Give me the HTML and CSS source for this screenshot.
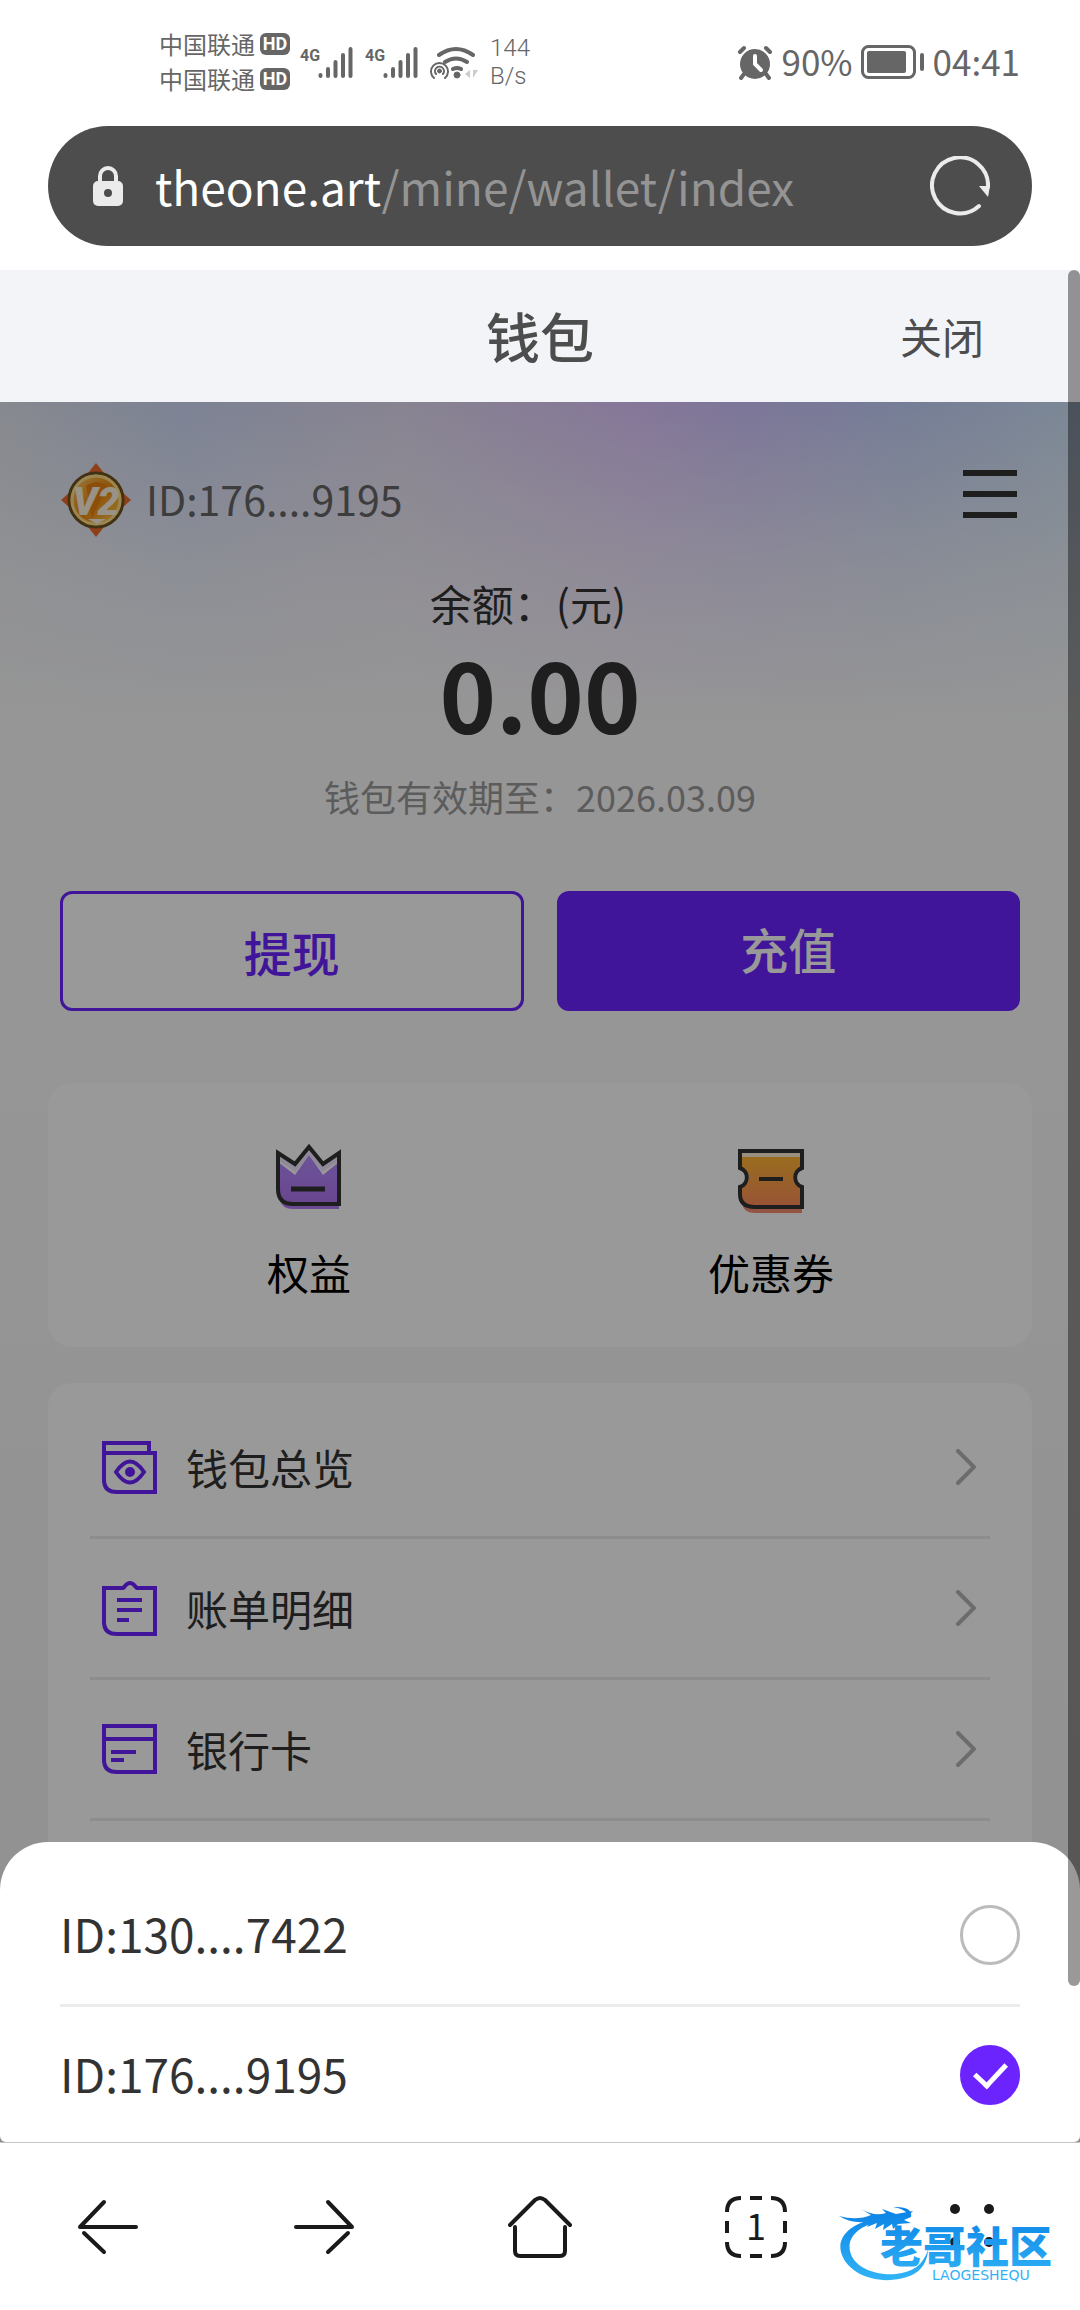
FILE: index.html
```
<!doctype html>
<html lang="zh-CN">
	<head>
		<meta charset="UTF-8" />
		<meta name="viewport" content="width=device-width, initial-scale=1.0" />
		<title>钱包</title>
		<link rel="stylesheet" href="styles.css">
	</head>
	<body>
		<div class="status-bar">
			<div class="carriers">
				<div class="carrier">中国联通<span class="hd">HD</span></div>
				<div class="carrier">中国联通<span class="hd">HD</span></div>
			</div>
			<svg class="signal" width="54" height="36" viewBox="0 0 54 36">
				<text x="0" y="17">4G</text>
				<path d="M20.500 31v1M28 25v7M35.500 18v14M43 11v21M50.500 5v27" />
			</svg>
			<svg class="signal" width="54" height="36" viewBox="0 0 54 36">
				<text x="0" y="17">4G</text>
				<path d="M20.500 31v1M28 25v7M35.500 18v14M43 11v21M50.500 5v27" />
			</svg>
			<svg class="wifi" width="50" height="36" viewBox="0 0 50 36">
				<path d="M9 11q17-12 34 0M15 18q11-7 22 0M23 25q4-2 8 0" stroke-width="4" />
				<path d="M4 34a8.500 8.500 0 1 1 11 0M6 30a4.500 4.500 0 1 1 7 0" stroke-width="2" />
				<circle cx="9.500" cy="27" r="2" />
				<circle cx="27" cy="31" r="3" />
				<path class="faint" d="M40 26v8l-5-4zM43 26h5l-5 8z" />
			</svg>
			<div class="speed">144<br>B/s</div>
			<div class="status-right">
				<svg width="36" height="36" viewBox="0 0 36 36">
					<circle cx="18" cy="20" r="15" fill="#666" />
					<path d="M3 8l4-4M33 8l-4-4M7 30l-3 4M29 30l3 4" stroke="#666" stroke-width="4" stroke-linecap="round" />
					<path d="M18 12v8l6 6" fill="none" stroke="#fff" stroke-width="4" stroke-linecap="round" />
				</svg>
				<span>90%</span>
				<svg width="64" height="34" viewBox="0 0 64 34">
					<rect x="1.500" y="1.500" width="52" height="31" rx="6" fill="none" stroke="#666" stroke-width="3" />
					<rect x="6" y="6" width="39" height="22" rx="2" fill="#666" />
					<path d="M61 10v14" stroke="#666" stroke-width="4" stroke-linecap="round" />
				</svg>
				<span>04:41</span>
			</div>
		</div>

		<div class="address-bar">
			<button class="address" type="button">
				<svg width="30" height="40" viewBox="0 0 30 40">
					<path d="M7 17v-7a8 8 0 0 1 16 0v7" fill="none" stroke="#ebebeb" stroke-width="4" />
					<rect y="15" width="30" height="25" rx="5" fill="#ebebeb" />
					<circle cx="15" cy="27" r="4" fill="#4d4d4d" />
				</svg>
				<span class="url">theone.art<span class="path">/mine/wallet/index</span></span>
			</button>
			<button class="reload" type="button" aria-label="刷新">
				<svg width="60" height="60" viewBox="0 0 60 60">
					<path d="M49 50A28 28 0 1 1 58 31" fill="none" stroke="#ebebeb" stroke-width="4" stroke-linecap="round" />
					<path d="M49 30h11l-2 11z" fill="#ebebeb" />
				</svg>
			</button>
		</div>

		<div class="webview">
			<header class="title-bar">
				<h1>钱包</h1>
				<a href="#">关闭</a>
			</header>

			<main class="wallet">
				<div class="account-row">
					<div class="account">
						<svg width="72" height="76" viewBox="0 0 72 76">
							<defs>
								<linearGradient id="gold" x1="0" y1="0" x2="1" y2="1">
									<stop offset="0" stop-color="#ffcf70" />
									<stop offset=".5" stop-color="#f08c10" />
									<stop offset="1" stop-color="#ffd95c" />
								</linearGradient>
							</defs>
							<path d="M36 1l8 10H28zM36 75l8-10H28zM1 38l9-8v16zM71 38l-9-8v16z" fill="#ee6a2c" />
							<circle cx="36" cy="38" r="27" fill="url(#gold)" stroke="#6e5420" stroke-width="3" />
							<circle cx="36" cy="38" r="24" fill="none" stroke="#ffdf8a" stroke-width="3" />
							<path d="M26 24q11-8 21 0l-15 32z" fill="#e98310" />
							<text class="badge-text" x="36" y="53">V2</text>
							<path d="M28 57h18l-9 5z" fill="#fff3e0" />
						</svg>
						<span>ID:176....9195</span>
					</div>
					<button class="menu" type="button" aria-label="菜单"><i></i><i></i><i></i></button>
				</div>

				<p class="balance-label">余额：(元)</p>
				<p class="balance">0.00</p>
				<p class="expiry">钱包有效期至：2026.03.09</p>

				<div class="actions">
					<button class="withdraw" type="button">提现</button>
					<button class="recharge" type="button">充值</button>
				</div>

				<div class="card shortcuts">
					<a href="#">
						<svg width="72" height="76" viewBox="0 0 72 76">
							<defs>
								<linearGradient id="violet" x1="0" y1="0" x2="0" y2="1">
									<stop offset="0" stop-color="#b48cff" />
									<stop offset="1" stop-color="#b074f0" />
								</linearGradient>
							</defs>
							<path d="M7 60h59v9H20Q9 69 7 60z" fill="#b47af5" />
							<path d="M5 22l17 13L36 15l14 20 16-13v42H20Q5 64 5 51z" fill="url(#violet)" />
							<path d="M5 18l17 11L36 12l14 17 16-11" fill="none" stroke="#eee4ff" stroke-width="4" />
							<path d="M5 13l17 11L36 7l14 17 16-11v51H20Q5 64 5 49z" fill="none" stroke="#333" stroke-width="4" />
							<path d="M18 49h34" stroke="#333" stroke-width="5" />
						</svg>
						<span>权益</span>
					</a>
					<a href="#">
						<svg width="72" height="76" viewBox="0 0 72 76">
							<defs>
								<linearGradient id="orange" x1="0" y1="0" x2="0" y2="1">
									<stop offset="0" stop-color="#ffb534" />
									<stop offset="1" stop-color="#ff8b5c" />
								</linearGradient>
							</defs>
							<path d="M7 64h60v9H20Q9 73 7 64z" fill="#f58c70" />
							<path d="M5 17h62v12a9 9 0 0 0 0 18v20H20Q5 67 5 54v-7a9 9 0 0 0 0-18z" fill="url(#orange)" />
							<path d="M6 15h60" stroke="#ffefd8" stroke-width="4" />
							<path d="M5 11h62v17a10 10 0 0 0 0 19v20H20Q5 67 5 54v-7a10 10 0 0 0 0-19z" fill="none" stroke="#333" stroke-width="4" />
							<path d="M24 39h24" stroke="#333" stroke-width="4" />
						</svg>
						<span>优惠券</span>
					</a>
				</div>

				<nav class="card list">
					<a href="#">
						<svg class="list-icon" width="56" height="56" viewBox="0 0 56 56">
							<path d="M2 14h51v39H15Q2 53 2 41V4h45v10" />
							<path d="M14 33q14-21 28 0q-14 21-28 0z" />
							<circle cx="28" cy="33" r="5" />
						</svg>
						<span>钱包总览</span>
						<svg class="chevron" width="20" height="36" viewBox="0 0 20 36"><path d="M2 2l16 16L2 34" /></svg>
					</a>
					<a href="#">
						<svg class="list-icon" width="56" height="56" viewBox="0 0 56 56">
							<path d="M2 8h18q2 0 3-2q5-6 10 0q1 2 3 2h17v46H15Q2 54 2 42z" />
							<path d="M15 20h25M15 30h25M15 40h12" />
						</svg>
						<span>账单明细</span>
						<svg class="chevron" width="20" height="36" viewBox="0 0 20 36"><path d="M2 2l16 16L2 34" /></svg>
					</a>
					<a href="#">
						<svg class="list-icon" width="56" height="56" viewBox="0 0 56 56">
							<path d="M2 5h51v46H15Q2 51 2 39zM2 18h51" />
							<path d="M9 31h25M9 39h13" />
						</svg>
						<span>银行卡</span>
						<svg class="chevron" width="20" height="36" viewBox="0 0 20 36"><path d="M2 2l16 16L2 34" /></svg>
					</a>
				</nav>
			</main>

			<form class="sheet">
				<label>
					<span>ID:130....7422</span>
					<input type="radio" name="account" value="130">
				</label>
				<label>
					<span>ID:176....9195</span>
					<input type="radio" name="account" value="176" checked>
				</label>
			</form>
			<div class="scrollbar"></div>
		</div>

		<nav class="toolbar">
			<button type="button" aria-label="后退">
				<svg width="64" height="64" viewBox="0 0 64 64">
					<path d="M60 32H4L28 7" /><path d="M8 38l20 19" />
				</svg>
			</button>
			<button type="button" aria-label="前进">
				<svg width="64" height="64" viewBox="0 0 64 64">
					<path d="M4 32h56L36 7" /><path d="M56 38L36 57" />
				</svg>
			</button>
			<button type="button" aria-label="主页">
				<svg width="64" height="64" viewBox="0 0 64 64">
					<path d="M2 30L27 5q5-4 10 0l25 25" /><path d="M7 32v24q0 5 5 5h40q5 0 5-5V32" />
				</svg>
			</button>
			<button type="button" aria-label="标签页">
				<svg width="64" height="64" viewBox="0 0 64 64">
					<path class="butt" d="M3 17Q3 3 17 3M26 3h12M47 3q14 0 14 14M61 26v12M61 47q0 14-14 14M38 61H26M17 61Q3 61 3 47M3 38V26" />
					<text class="tab-count" x="32" y="45">1</text>
				</svg>
			</button>
			<button type="button" aria-label="更多">
				<svg class="dots" width="64" height="64" viewBox="0 0 64 64">
					<circle cx="15" cy="14" r="5" /><circle cx="49" cy="14" r="5" />
					<circle cx="15" cy="47" r="5" /><circle cx="49" cy="47" r="5" />
				</svg>
			</button>
			<svg class="watermark" width="226" height="80" viewBox="0 0 226 80">
				<defs>
					<linearGradient id="water" gradientUnits="userSpaceOnUse" x1="0" y1="0" x2="0" y2="80">
						<stop offset="0" stop-color="#0a80e4" />
						<stop offset="1" stop-color="#34b8f8" />
					</linearGradient>
				</defs>
				<g fill="url(#water)">
					<path d="M42 12C14 16-1 30 3 46c5 20 32 32 58 27 18-3 28-13 29-29-5 15-15 22-32 24-23 2-43-8-46-23-3-14 9-26 32-30z" />
					<path d="M1 10q18 5 32-1l-10-6q14 8 25 4l-4-4 14 5 17-3-4 4q-6-7-16-8 20-1 18 10l-7 3 7 3-13 1-5 5-1-5-9 6 1-6-9 5 2-6-10 4 3-6q-16 4-31-5z" />
					<text class="mark-cn" x="42" y="57">老哥社区</text>
					<text class="mark-en" x="94" y="74">LAOGESHEQU</text>
				</g>
			</svg>
		</nav>
	</body>
</html>
```
FILE: styles.css
```
* { box-sizing: border-box; }
body { display: flex; flex-direction: column; height: 100vh; margin: 0; overflow: hidden; background: #fff; color: #333; font-family: "Noto Sans CJK SC", sans-serif; }
h1, p { margin: 0; }
a { color: inherit; text-decoration: none; }
button { padding: 0; border: none; background: none; color: inherit; font-family: inherit; cursor: pointer; }
svg { display: block; flex: none; }

/* phone status bar */
.status-bar { display: flex; align-items: center; flex: none; height: 124px; margin-bottom: 2px; padding: 0 60px 0 159px; color: #666; }
.carriers { margin-right: 10px; padding-bottom: 2px; }
.carrier { display: flex; align-items: center; gap: 5px; height: 35px; font-size: 24px; }
.hd { width: 30px; height: 22px; border-radius: 6px; background: #666; color: #fff; font: bold 18px/22px Roboto, sans-serif; text-align: center; }
.signal { margin-right: 11px; fill: none; stroke: #666; stroke-width: 4; stroke-linecap: round; }
.signal text { fill: #666; stroke: none; font: bold 16px Roboto, sans-serif; }
.wifi { fill: none; stroke: #666; stroke-linecap: round; }
.wifi circle { fill: #666; }
.wifi .faint { fill: #ccc; stroke: none; }
.speed { margin-left: 10px; font: 300 24px/28px Roboto, sans-serif; }
.status-right { display: flex; align-items: center; gap: 8px; margin-left: auto; font-size: 35px; line-height: 50px; }
.status-right span { padding-bottom: 3px; }

.address-bar { display: flex; align-items: center; justify-content: space-between; flex: none; height: 120px; margin: 0 48px 24px; padding: 0 42px 0 45px; border-radius: 60px; background: #4d4d4d; }
.address { display: flex; align-items: center; gap: 32px; }
.url { color: #fff; font-size: 46px; line-height: 72px; }
.path { color: #949494; }

/* page inside the browser */
.webview { display: flex; flex-direction: column; flex: 1; position: relative; min-height: 0; overflow: hidden; }
.title-bar { display: grid; grid-template-columns: 1fr auto 1fr; align-items: center; flex: none; height: 132px; padding: 0 96px; background: #f3f4f8; color: #4d4d4d; }
.title-bar h1 { grid-column: 2; font-size: 54px; font-weight: 500; line-height: 72px; }
.title-bar a { justify-self: end; font-size: 42px; line-height: 60px; }

.wallet { display: flex; flex-direction: column; flex: 1; position: relative; min-height: 0; padding: 56px 48px 0; background: linear-gradient(#fbfbfb 30%, #f1f1f1); }
.wallet::before { content: ""; position: absolute; inset: 0 0 auto; height: 330px; background: linear-gradient(rgba(251, 251, 251, 0), rgba(251, 251, 251, .6) 50%, #fbfbfb), linear-gradient(90deg, #e0e4ee, #d0daf8 17%, #e3dcf3 37%, #dec6ff 59%, #d0c5ff 69%, #c4d2fb 84%, #cfe3fa); }
.wallet::after { content: ""; position: absolute; inset: 0; background: rgba(0, 0, 0, .4); }
.wallet > * { position: relative; }
.account-row { display: flex; align-items: flex-start; justify-content: space-between; padding: 0 12px; }
.account { display: flex; align-items: center; gap: 14px; height: 84px; color: #666; font-size: 41px; line-height: 60px; }
.account span { padding-bottom: 4px; }
.badge-text { fill: #fff3e0; font: italic 900 39px Roboto, sans-serif; text-anchor: middle; }
.menu { display: flex; flex-direction: column; justify-content: center; gap: 15px; height: 72px; margin-right: 3px; }
.menu i { width: 54px; height: 6px; background: #333; }
.balance-label { margin-top: 31px; padding-right: 24px; font-size: 42px; line-height: 60px; text-align: center; }
.balance { font-size: 96px; font-weight: bold; line-height: 120px; text-align: center; }
.expiry { margin-top: 18px; color: #999; font-size: 36px; line-height: 50px; text-align: center; }

.actions { display: grid; grid-template-columns: 1fr 1fr; gap: 33px; margin-top: 70px; padding: 0 12px; }
.actions button { height: 120px; border: 3px solid #6c24ff; border-radius: 12px; font-size: 48px; font-weight: 500; }
.withdraw { background: #fff; color: #6c24ff; }
.actions .recharge { padding-bottom: 6px; background: #6c24ff; color: #fff; }

.card { border-radius: 24px; background: #fff; }
.shortcuts { display: grid; grid-template-columns: 1fr 1fr; margin-top: 72px; padding: 57px 30px 45px; color: #000; font-size: 42px; line-height: 60px; }
.shortcuts a { display: flex; flex-direction: column; align-items: center; gap: 26px; }
.list { flex: 1; min-height: 0; margin-top: 36px; padding: 15px 42px 0; font-size: 42px; line-height: 60px; }
.list a { display: flex; align-items: center; gap: 28px; height: 141px; padding: 0 14px 0 12px; border-bottom: 3px solid #ececec; }
.list-icon { fill: none; stroke: #6c24ff; stroke-width: 4; }
.list-icon circle { fill: #6c24ff; stroke: none; }
.chevron { margin-left: auto; fill: none; stroke: #b4b4b4; stroke-width: 4; stroke-linecap: round; }

/* account picker */
.sheet { position: absolute; inset: auto 0 0; padding: 24px 60px 0; border-radius: 48px 48px 6px 6px; background: #fff; }
.sheet label { display: flex; align-items: center; justify-content: space-between; height: 135px; font-size: 46px; line-height: 72px; }
.sheet label:first-child { height: 141px; border-bottom: 3px solid #ececec; }
.sheet span { padding-bottom: 4px; }
.sheet input { display: flex; align-items: center; justify-content: center; appearance: none; width: 60px; height: 60px; margin: 0; border: 3px solid #bbb; border-radius: 50%; }
.sheet input:checked { border-color: #6c24ff; background: #6c24ff; }
.sheet input:checked::after { content: ""; width: 14px; height: 26px; margin-bottom: 6px; border: solid #fff; border-width: 0 5px 5px 0; transform: rotate(43deg); }
.scrollbar { position: absolute; top: 0; right: 0; bottom: 156px; width: 12px; border-radius: 6px; background: rgba(0, 0, 0, .4); }

/* browser toolbar */
.toolbar { display: grid; grid-template-columns: repeat(5, 1fr); flex: none; position: relative; height: 168px; border-top: 1px solid #c4c4c4; }
.toolbar button { display: flex; align-items: center; justify-content: center; }
.toolbar button svg { fill: none; stroke: #1a1a1a; stroke-width: 4; stroke-linecap: round; stroke-linejoin: round; }
.toolbar .butt { stroke-linecap: butt; }
.toolbar .tab-count { fill: #1a1a1a; stroke: none; font-size: 36px; text-anchor: middle; }
.toolbar button .dots { fill: #1a1a1a; stroke: none; }
.watermark { position: absolute; right: 16px; bottom: 24px; }
.mark-cn { font-size: 43px; font-weight: 900; }
.mark-en { font: 14px "DejaVu Sans", sans-serif; }
```
